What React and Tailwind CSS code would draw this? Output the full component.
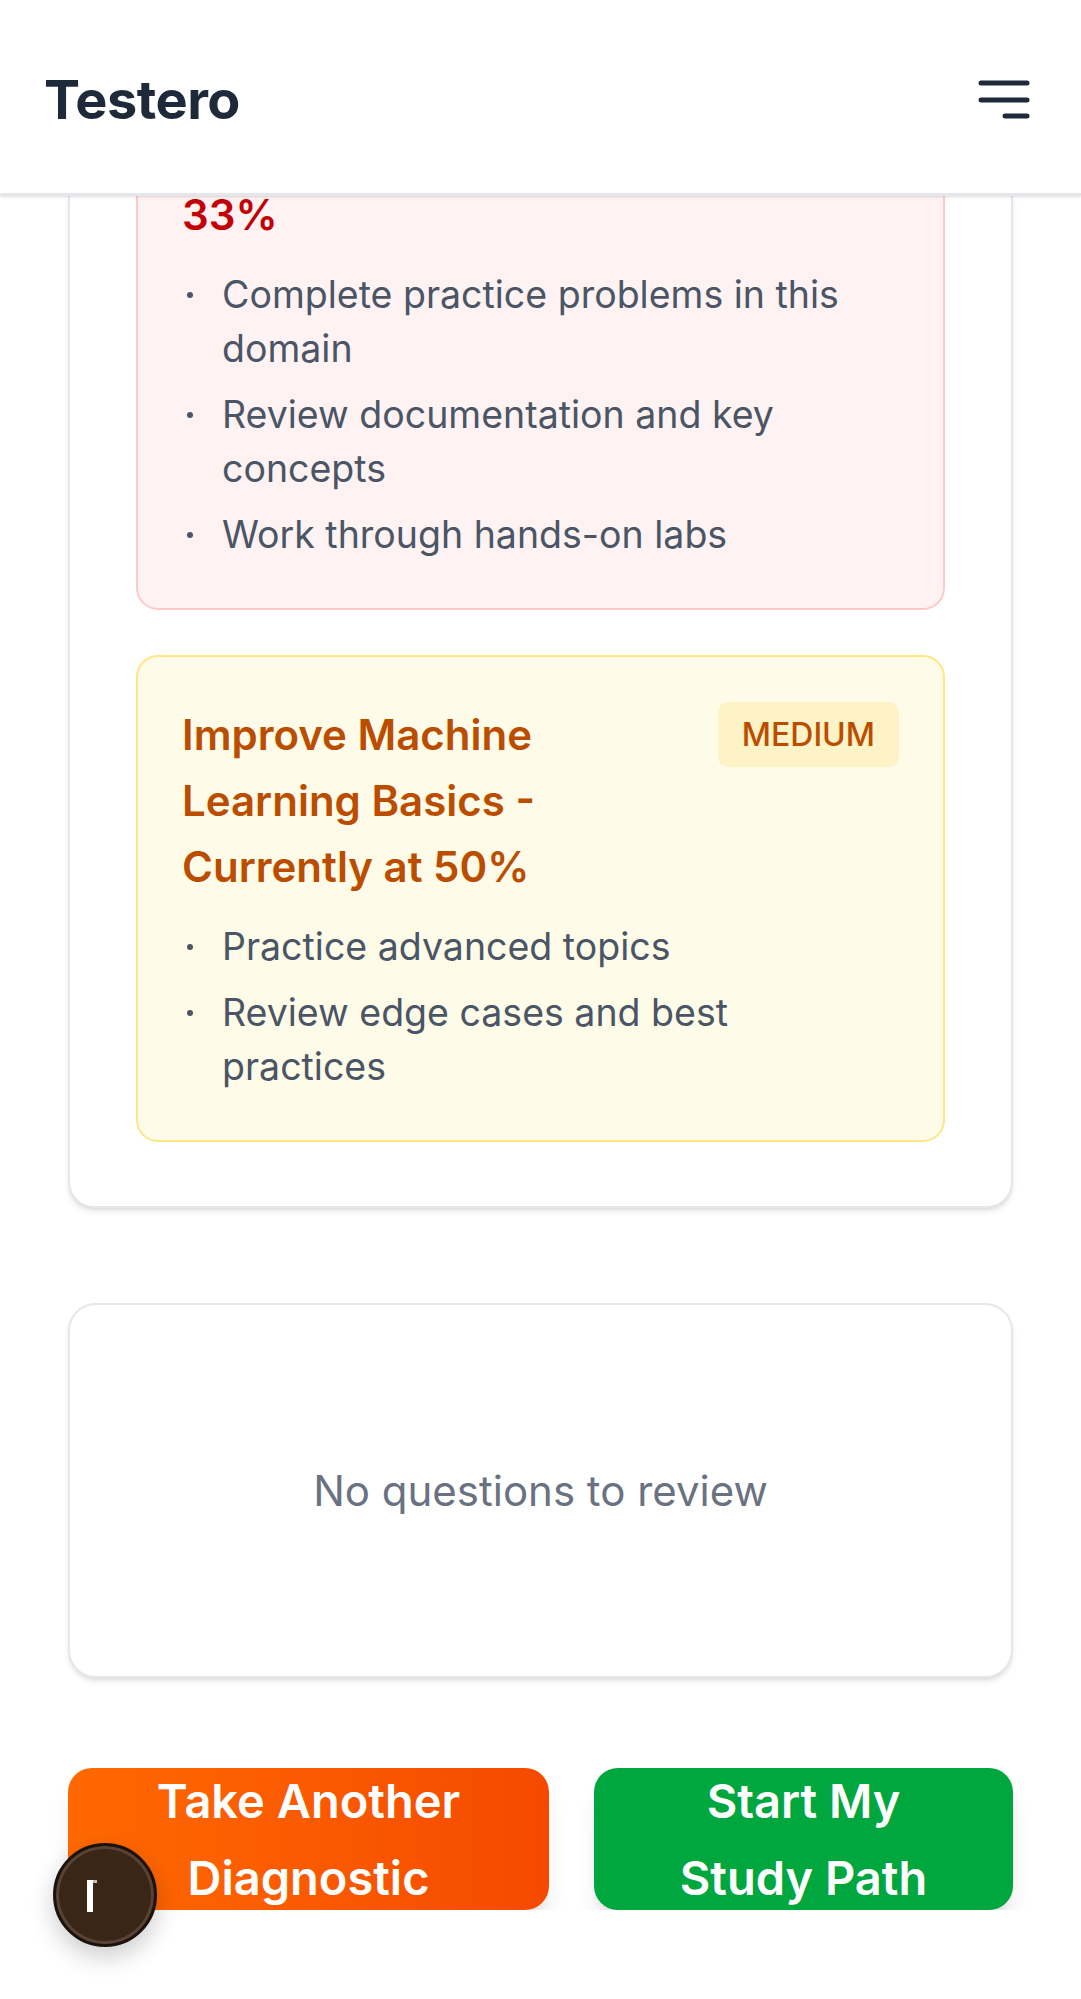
const RED_TIPS = [
  'Complete practice problems in this domain',
  'Review documentation and key concepts',
  'Work through hands-on labs',
]

const AMBER_TIPS = ['Practice advanced topics', 'Review edge cases and best practices']

function Tips({ items }) {
  return (
    <ul className="mt-[20px] space-y-[12px] pr-[8px]">
      {items.map((t) => (
        <li key={t} className="flex text-[37.5px] leading-[54px] text-[#4a5565]">
          <span className="flex h-[54px] w-[40px] shrink-0 items-center pl-[5px]">
            <span className="h-[6px] w-[6px] rounded-full bg-[#4a5565]" />
          </span>
          <span>{t}</span>
        </li>
      ))}
    </ul>
  )
}

function MenuIcon() {
  return (
    <svg width="52" height="40" viewBox="0 0 52 40" fill="none" stroke="#1e2939" strokeWidth="5" strokeLinecap="round">
      <line x1="3" y1="4" x2="49" y2="4" />
      <line x1="3" y1="21" x2="49" y2="21" />
      <line x1="27" y1="37" x2="49" y2="37" />
    </svg>
  )
}

export default function App() {
  return (
    <div className="relative min-h-[1999px] bg-white font-[family-name:Inter,sans-serif]">
      <header className="relative z-10 flex h-[196px] items-center justify-between border-b-[3px] border-[#e5e7eb] bg-white pl-[44px] pr-[51px] pt-[5px] shadow-sm">
        <h1 className="text-[54px] font-bold tracking-[-0.5px] text-[#1e2939]">Testero</h1>
        <MenuIcon />
      </header>

      <main className="overflow-hidden px-[68px]">
        <section className="rounded-b-[26px] border-2 border-t-0 border-[#e5e7eb] bg-white px-[66px] pb-[64px] shadow-md">
          <div className="flex flex-col gap-[45px]">
            <div className="-mt-[14px] rounded-b-[22px] border-2 border-t-0 border-[#ffc9c9] bg-[#fef2f2] px-[44px] pb-[46px]">
              <h3 className="text-[42px] font-semibold leading-[66px] text-[#c10007]">33%</h3>
              <Tips items={RED_TIPS} />
            </div>

            <div className="rounded-[22px] border-2 border-[#fee685] bg-[#fefbe8] px-[44px] pb-[46px] pt-[45px]">
              <div className="flex items-start justify-between gap-[24px]">
                <h3 className="max-w-[480px] text-[42px] font-semibold leading-[66px] text-[#bb4d00]">
                  Improve Machine Learning Basics - Currently at 50%
                </h3>
                <span className="flex h-[65px] items-center rounded-[10px] bg-[#fef3c6] px-[24px] text-[32px] font-medium text-[#bb4d00]">
                  MEDIUM
                </span>
              </div>
              <Tips items={AMBER_TIPS} />
            </div>
          </div>
        </section>

        <section className="mt-[95px] flex h-[375px] items-center justify-center rounded-[28px] border-2 border-[#e5e7eb] bg-white shadow-md">
          <p className="text-[42px] text-[#6a7282]">No questions to review</p>
        </section>

        <div className="mt-[90px] flex gap-[45px]">
          <button className="flex h-[142px] w-[481px] items-center justify-center rounded-[24px] bg-gradient-to-r from-[#ff6900] to-[#f54900] px-[30px] text-center text-[47px] font-semibold leading-[77px] text-white shadow-xl">
            Take Another Diagnostic
          </button>
          <button className="flex h-[142px] flex-1 items-center justify-center rounded-[24px] bg-[#00a63e] px-[60px] text-center text-[47px] font-semibold leading-[77px] text-white shadow-xl">
            Start My Study Path
          </button>
        </div>
      </main>

      <div className="absolute left-[53px] top-[1843px] h-[104px] w-[104px] rounded-full border-[3px] border-[#1a120c] bg-[#3a2616] shadow-[inset_0_0_0_3px_#574233,0_10px_25px_rgba(0,0,0,0.2)]">
        <span className="absolute left-[31px] top-[34px] h-[32px] w-[6px] bg-white" />
        <span className="absolute left-[37px] top-[34px] h-[3px] w-[4px] bg-white/70" />
      </div>
    </div>
  )
}
